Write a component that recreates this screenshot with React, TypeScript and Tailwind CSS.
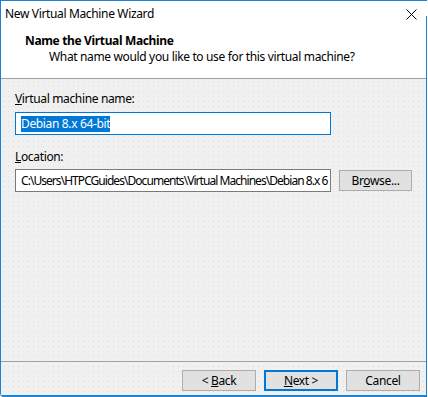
import React from "react";

const font = { fontFamily: '"Noto Sans", "Liberation Sans", sans-serif' };

const WinButton = ({
  children,
  focused = false,
  className = "",
}: {
  children: React.ReactNode;
  focused?: boolean;
  className?: string;
}) => (
  <button
    className={`shrink-0 flex items-center justify-center bg-[#e1e1e1] text-[12px] text-black ${
      focused ? "border-2 border-[#0078d7]" : "border border-[#adadad]"
    } ${className}`}
  >
    <span className="whitespace-pre">{children}</span>
  </button>
);

export default function App() {
  return (
    <div className="w-[428px] h-[397px] bg-white tracking-[-0.35px]" style={font}>
      <div className="relative flex flex-col w-[427px] h-[397px] border-t border-l border-[#1883d7] border-b-2 rounded-bl-[4px] bg-white">
        {/* right window edge */}
        <div className="absolute right-0 top-[15px] bottom-0 w-px bg-[#1883d7]" />

        {/* title bar */}
        <div className="flex items-center justify-between h-[26px] pl-[4px] pr-[9px] text-[12px] text-black leading-none">
          <span>New Virtual Machine Wizard</span>
          <svg width="11" height="11" viewBox="0 0 11 11" className="mr-[1px]">
            <path d="M0.5 0.5 L10.5 10.5 M10.5 0.5 L0.5 10.5" stroke="#000" strokeWidth="1" />
          </svg>
        </div>

        {/* header */}
        <div className="flex flex-col h-[52px] pt-[7px] text-[12px] text-black leading-[14px] border-b border-[#a0a0a0]">
          <span className="pl-[24px] font-bold">Name the Virtual Machine</span>
          <span className="pl-[48px] mt-[2px]">What name would you like to use for this virtual machine?</span>
        </div>

        {/* body */}
        <div className="flex flex-col flex-1 bg-[#f0f0f0] bg-[radial-gradient(#dedede_0.8px,transparent_0.8px)] bg-[size:5px_5px] text-[12px] text-black">
          <div className="flex flex-col px-[14px] pt-[13px]">
            <label className="leading-[14px]">
              <span className="underline">V</span>irtual machine name:
            </label>
            <div className="mt-[6px] flex items-center w-[316px] h-[23px] bg-white border border-[#0078d7] px-[5px]">
              <span className="bg-[#0078d7] text-white leading-[16px]">Debian 8.x 64-bit</span>
            </div>

            <label className="mt-[15px] leading-[14px]">
              <span className="underline">L</span>ocation:
            </label>
            <div className="mt-[5px] flex items-center gap-[8px]">
              <div className="shrink-0 flex items-center w-[316px] h-[23px] bg-white border border-[#7a7a7a] px-[5px] overflow-hidden whitespace-nowrap tracking-[-0.95px]">
                C:\Users\HTPCGuides\Documents\Virtual Machines\Debian 8.x 6
              </div>
              <WinButton className="w-[73px] h-[21px]">
                Br<span className="underline">o</span>wse...
              </WinButton>
            </div>
          </div>

          <div className="flex-1" />

          <div className="border-t border-[#a0a0a0] flex justify-end gap-[8px] pr-[7px] pt-[8px] h-[34px]">
            <WinButton className="w-[74px] h-[21px]">
              {"< "}
              <span className="underline">B</span>ack
            </WinButton>
            <WinButton focused className="w-[74px] h-[21px]">
              <span className="underline">N</span>ext &gt;
            </WinButton>
            <WinButton className="w-[74px] h-[21px]">Cancel</WinButton>
          </div>
        </div>
      </div>
    </div>
  );
}
